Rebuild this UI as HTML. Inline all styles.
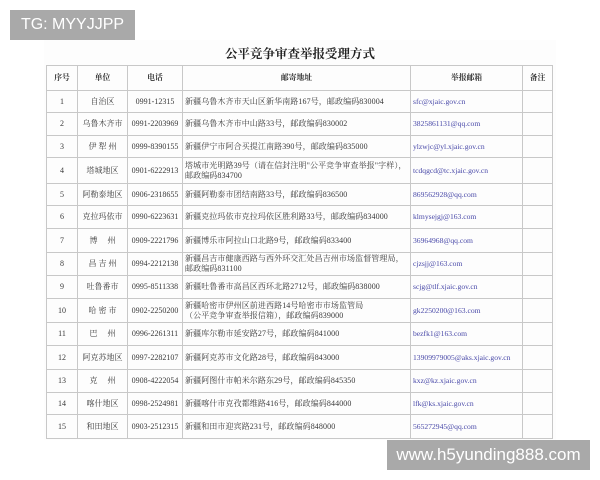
<!DOCTYPE html>
<html><head><meta charset="utf-8"><style>
html,body{margin:0;padding:0;background:#fff;width:600px;height:480px;overflow:hidden;position:relative}
.panel{position:absolute;left:44px;top:40px;width:512px;height:400px;background:#fdfdfd}
.title{position:absolute;left:0;top:44px;width:600px;text-align:center;font:bold 12.5px "Liberation Serif","Noto Serif CJK SC",serif;color:#222}
table{position:absolute;left:46px;top:65px;width:506px;border-collapse:collapse;table-layout:fixed;font:8px "Liberation Serif","Noto Serif CJK SC",serif;color:#3a3a3a}
td{border:1px solid #c8c8c8;text-align:center;padding:0 2px;line-height:10px;overflow:hidden;white-space:nowrap}
td.a{text-align:left;font-size:8px;letter-spacing:0.1px}
td.e{text-align:left;color:#4848a8;font-size:7.6px}
tr.h td{font-weight:bold;color:#333;font-size:7.8px}
.tg{position:absolute;left:10px;top:10px;width:125px;height:30px;background:#a9a9a9;color:#fff;font:16px "Liberation Sans",sans-serif;line-height:30px;text-align:center}
.url{position:absolute;left:387px;top:440px;width:203px;height:30px;background:#a9a9a9;color:#fff;font:17px "Liberation Sans",sans-serif;line-height:30px;text-align:center}
</style></head><body>
<div class="panel"></div>
<div class="title">公平竞争审查举报受理方式</div>
<table>
<colgroup><col style="width:31px"><col style="width:50px"><col style="width:55px"><col style="width:228px"><col style="width:112px"><col style="width:30px"></colgroup>
<tr class="h" style="height:25px"><td>序号</td><td>单位</td><td>电话</td><td>邮寄地址</td><td>举报邮箱</td><td>备注</td></tr>
<tr style="height:22px"><td>1</td><td>自治区</td><td>0991-12315</td><td class="a">新疆乌鲁木齐市天山区新华南路167号，邮政编码830004</td><td class="e">sfc@xjaic.gov.cn</td><td></td></tr>
<tr style="height:23px"><td>2</td><td>乌鲁木齐市</td><td>0991-2203969</td><td class="a">新疆乌鲁木齐市中山路33号，邮政编码830002</td><td class="e">3825861131@qq.com</td><td></td></tr>
<tr style="height:22px"><td>3</td><td>伊 犁 州</td><td>0999-8390155</td><td class="a">新疆伊宁市阿合买提江南路390号，邮政编码835000</td><td class="e">ylzwjc@yl.xjaic.gov.cn</td><td></td></tr>
<tr style="height:26px"><td>4</td><td>塔城地区</td><td>0901-6222913</td><td class="a">塔城市光明路39号（请在信封注明"公平竞争审查举报"字样），<br>邮政编码834700</td><td class="e">tcdqgcd@tc.xjaic.gov.cn</td><td></td></tr>
<tr style="height:22px"><td>5</td><td>阿勒泰地区</td><td>0906-2318655</td><td class="a">新疆阿勒泰市团结南路33号，邮政编码836500</td><td class="e">869562928@qq.com</td><td></td></tr>
<tr style="height:23px"><td>6</td><td>克拉玛依市</td><td>0990-6223631</td><td class="a">新疆克拉玛依市克拉玛依区胜利路33号，邮政编码834000</td><td class="e">klmysejgj@163.com</td><td></td></tr>
<tr style="height:24px"><td>7</td><td>博　 州</td><td>0909-2221796</td><td class="a">新疆博乐市阿拉山口北路9号，邮政编码833400</td><td class="e">36964968@qq.com</td><td></td></tr>
<tr style="height:23px"><td>8</td><td>昌 吉 州</td><td>0994-2212138</td><td class="a">新疆昌吉市健康西路与西外环交汇处昌吉州市场监督管理局，<br>邮政编码831100</td><td class="e">cjzsjj@163.com</td><td></td></tr>
<tr style="height:23px"><td>9</td><td>吐鲁番市</td><td>0995-8511338</td><td class="a">新疆吐鲁番市高昌区西环北路2712号，邮政编码838000</td><td class="e">scjg@tlf.xjaic.gov.cn</td><td></td></tr>
<tr style="height:24px"><td>10</td><td>哈 密 市</td><td>0902-2250200</td><td class="a">新疆哈密市伊州区前进西路14号哈密市市场监管局<br>（公平竞争审查举报信箱），邮政编码839000</td><td class="e">gk2250200@163.com</td><td></td></tr>
<tr style="height:23px"><td>11</td><td>巴　 州</td><td>0996-2261311</td><td class="a">新疆库尔勒市延安路27号，邮政编码841000</td><td class="e">bezfk1@163.com</td><td></td></tr>
<tr style="height:24px"><td>12</td><td>阿克苏地区</td><td>0997-2282107</td><td class="a">新疆阿克苏市文化路28号，邮政编码843000</td><td class="e">13909979005@aks.xjaic.gov.cn</td><td></td></tr>
<tr style="height:23px"><td>13</td><td>克　 州</td><td>0908-4222054</td><td class="a">新疆阿图什市帕米尔路东29号，邮政编码845350</td><td class="e">kxz@kz.xjaic.gov.cn</td><td></td></tr>
<tr style="height:22px"><td>14</td><td>喀什地区</td><td>0998-2524981</td><td class="a">新疆喀什市克孜都维路416号，邮政编码844000</td><td class="e">lfk@ks.xjaic.gov.cn</td><td></td></tr>
<tr style="height:24px"><td>15</td><td>和田地区</td><td>0903-2512315</td><td class="a">新疆和田市迎宾路231号，邮政编码848000</td><td class="e">565272945@qq.com</td><td></td></tr>
</table>
<div class="tg">TG: MYYJJPP</div>
<div class="url">www.h5yunding888.com</div>
</body></html>
